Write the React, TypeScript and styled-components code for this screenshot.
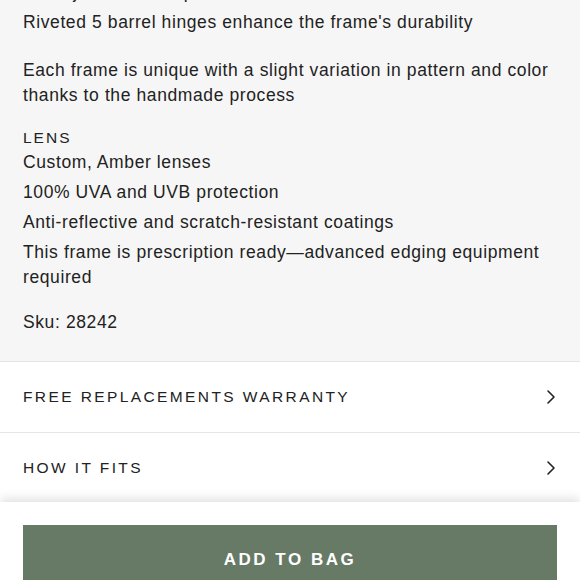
import { useLayoutEffect, useRef } from 'react';
import styled, { createGlobalStyle } from 'styled-components';

const GlobalStyle = createGlobalStyle`
  html, body {
    margin: 0;
    padding: 0;
    background: #ffffff;
  }
  body {
    font-family: "Liberation Sans", Arial, sans-serif;
    color: #222222;
  }
`;

const Scroller = styled.div`
  position: relative;
  height: 100vh;
  overflow: hidden;
`;

const Details = styled.section`
  background: #f6f6f6;
  border-bottom: 1px solid #e4e4e4;
  padding: 24px 23px 26px;
`;

const Heading = styled.div<{ $gap?: number }>`
  font-size: 15.5px;
  line-height: 25px;
  letter-spacing: 2px;
  text-transform: uppercase;
  margin-top: ${(p) => p.$gap ?? 0}px;
`;

const List = styled.ul`
  list-style: none;
  margin: 0;
  padding: 0;
  display: flex;
  flex-direction: column;
  gap: 5px;
`;

const Item = styled.li`
  font-size: 17.5px;
  line-height: 25px;
  letter-spacing: 0.6px;
`;

const Para = styled.p<{ $gap: number }>`
  margin: ${(p) => p.$gap}px 0 0;
  font-size: 17.5px;
  line-height: 25px;
  letter-spacing: 0.6px;
`;

const Row = styled.div`
  display: flex;
  align-items: center;
  justify-content: space-between;
  height: 70px;
  padding: 0 23px;
  border-bottom: 1px solid #e6e6e6;
  background: #ffffff;
`;

const RowLabel = styled.span`
  font-size: 15.5px;
  letter-spacing: 2.4px;
  text-transform: uppercase;
`;

const Spacer = styled.div`
  height: 120px;
`;

const BottomBar = styled.div`
  position: fixed;
  left: 0;
  right: 0;
  bottom: 0;
  height: 78px;
  padding: 23px 23px 0;
  box-sizing: border-box;
  background: #ffffff;
  box-shadow: 0 -3px 10px rgba(0, 0, 0, 0.13);
  overflow: hidden;
`;

const BagButton = styled.button`
  display: flex;
  align-items: center;
  justify-content: center;
  width: 100%;
  height: 70px;
  border: none;
  background: #677a66;
  color: #ffffff;
  font-family: "Liberation Sans", Arial, sans-serif;
  font-weight: 700;
  font-size: 17px;
  letter-spacing: 2.5px;
`;

const Chevron = () => (
  <svg width="12" height="16" viewBox="0 0 12 16" fill="none">
    <polyline points="3,2 9,8 3,14" stroke="#222" strokeWidth="1.6" strokeLinecap="round" strokeLinejoin="round" />
  </svg>
);

const frameItems = [
  'Handcrafted from premium acetate',
  'Thick joint-free temples',
  "Riveted 5 barrel hinges enhance the frame's durability",
];

const lensItems = [
  'Custom, Amber lenses',
  '100% UVA and UVB protection',
  'Anti-reflective and scratch-resistant coatings',
  'This frame is prescription ready\u2014advanced edging equipment required',
];

const rows = ['Free Replacements Warranty', 'How It Fits', 'Shipping & Returns'];

export default function App() {
  const scrollRef = useRef<HTMLDivElement>(null);
  const anchorRef = useRef<HTMLLIElement>(null);

  // the page is shown scrolled down to the lens details
  useLayoutEffect(() => {
    if (scrollRef.current && anchorRef.current) {
      scrollRef.current.scrollTop = anchorRef.current.offsetTop - 10;
    }
  }, []);

  return (
    <>
      <GlobalStyle />
      <Scroller ref={scrollRef}>
        <Details>
          <Heading>Frame</Heading>
          <List>
            {frameItems.map((t, i) => (
              <Item key={t} ref={i === frameItems.length - 1 ? anchorRef : undefined}>
                {t}
              </Item>
            ))}
          </List>
          <Para $gap={23}>
            Each frame is unique with a slight variation in pattern and color thanks to the handmade process
          </Para>
          <Heading $gap={17}>Lens</Heading>
          <List>
            {lensItems.map((t) => (
              <Item key={t}>{t}</Item>
            ))}
          </List>
          <Para $gap={20}>Sku: 28242</Para>
        </Details>
        {rows.map((r) => (
          <Row key={r}>
            <RowLabel>{r}</RowLabel>
            <Chevron />
          </Row>
        ))}
        <Spacer />
      </Scroller>
      <BottomBar>
        <BagButton>ADD TO BAG</BagButton>
      </BottomBar>
    </>
  );
}
